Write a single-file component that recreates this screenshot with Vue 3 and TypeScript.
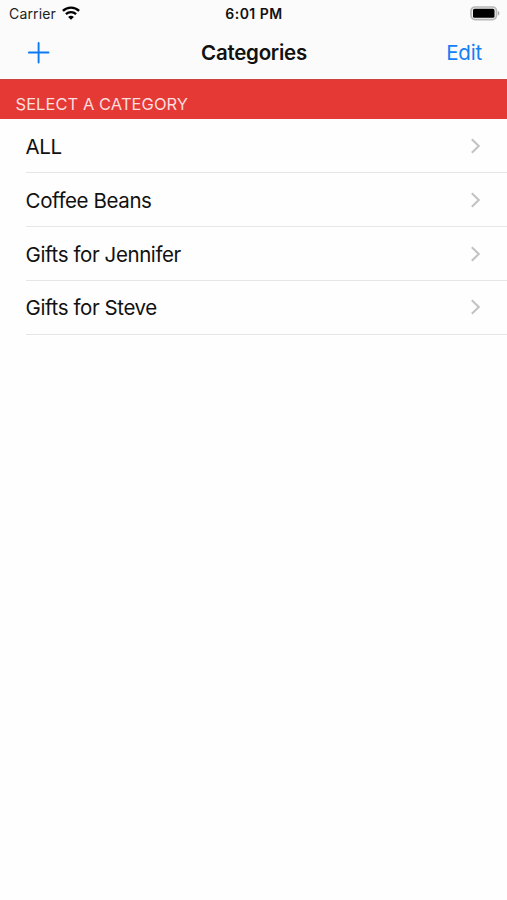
<script setup lang="ts">
import { ref } from 'vue'

const carrier = ref<string>('Carrier')
const time = ref<string>('6:01 PM')
const categories = ref<string[]>(['ALL', 'Coffee Beans', 'Gifts for Jennifer', 'Gifts for Steve'])
</script>

<template>
  <main class="screen">
    <header class="top">
      <div class="status">
        <div class="network">
          <span class="carrier">{{ carrier }}</span>
          <svg class="wifi" width="18" height="14" viewBox="0 0 18 14" fill="none" stroke="#000">
            <path d="M.9 4.9C5.4.5 12.6.5 17.1 4.9" stroke-width="2.4" />
            <path d="M3.9 8.1c2.9-2.7 7.3-2.7 10.2 0" stroke-width="2.3" />
            <path d="M9 13.8 6.1 10.9c1.7-1.5 4.1-1.5 5.8 0Z" fill="#000" stroke="none" />
          </svg>
        </div>
        <span class="time">{{ time }}</span>
        <div class="power">
          <svg width="30" height="15" viewBox="0 0 30 15">
            <rect x="1" y="1" width="25.5" height="12.6" rx="4" fill="#eee" stroke="#b8b8b8" stroke-width="1.7" />
            <rect x="3" y="2.8" width="21.5" height="9" rx="1.6" fill="#000" />
            <path d="M27.9 5c2 .7 2 3.9 0 4.6Z" fill="#aaa" />
          </svg>
        </div>
      </div>
      <nav class="bar">
        <button class="add" aria-label="Add category">
          <svg width="22" height="22" viewBox="0 0 22 22" fill="none" stroke="#0b7bf4" stroke-width="1.9" stroke-linecap="round">
            <path d="M10.6 .95v19.6M.9 10.5h19.6" />
          </svg>
        </button>
        <h1 class="title">Categories</h1>
        <button class="edit">Edit</button>
      </nav>
    </header>
    <h2 class="section"><span>SELECT A CATEGORY</span></h2>
    <ul class="list">
      <li v-for="name in categories" :key="name" class="row">
        <span>{{ name }}</span>
        <svg width="10" height="16" viewBox="0 0 10 16" fill="none" stroke="#c2c2c5" stroke-width="2">
          <path d="m.8 1.2 7 6.8-7 6.8" />
        </svg>
      </li>
    </ul>
  </main>
</template>

<style>
body {
  background: #fefefe;
}
</style>

<style scoped>
.screen {
  height: 900px;
  overflow: hidden;
  background: #fefefe;
  color: #111;
  font-family: Inter, "Liberation Sans", sans-serif;
}
.top {
  box-sizing: border-box;
  height: 79px;
  background: #fbfbfb;
}
.status,
.bar {
  display: grid;
  grid-template-columns: 1fr auto 1fr;
  align-items: center;
}
.status {
  box-sizing: border-box;
  height: 27px;
  padding: 0 7px 0 9px;
  font-size: 14px;
}
.network {
  display: flex;
  align-items: center;
  gap: 6px;
}
.carrier {
  letter-spacing: 0.15px;
  color: #222;
}
.wifi {
  margin-top: -2px;
}
.time {
  margin-right: 1px;
  font-weight: 600;
  font-size: 14px;
  letter-spacing: 0.5px;
}
.power {
  display: flex;
  justify-content: flex-end;
}
.bar {
  height: 51px;
  padding: 0 25px 0 28px;
}
button {
  display: flex;
  padding: 0;
  border: 0;
  background: none;
  font: inherit;
}
.add {
  justify-self: start;
}
.edit {
  justify-self: end;
  color: #1480f5;
  font-size: 20.5px;
  line-height: 24px;
  letter-spacing: -0.2px;
}
.title {
  margin: 0 2px 0 0;
  font-size: 20.5px;
  line-height: 24px;
  font-weight: 600;
  letter-spacing: -0.25px;
}
.section {
  display: flex;
  align-items: flex-end;
  box-sizing: border-box;
  height: 40.4px;
  margin: 0;
  padding: 0 15.5px 5.4px;
  border-top: 1px solid #c9443e;
  background: #e53935;
  color: #fbdedd;
  font-size: 16.5px;
  line-height: 20px;
  letter-spacing: 0.05px;
  font-weight: 400;
}
.list {
  margin: 0;
  padding: 0.4px 0 0 25.6px;
  list-style: none;
}
.row {
  display: flex;
  align-items: center;
  justify-content: space-between;
  box-sizing: border-box;
  height: 53.7px;
  padding: 0 26px 0 0;
  border-bottom: 1px solid #e6e6e7;
  font-size: 20.5px;
  line-height: 24px;
  letter-spacing: -0.4px;
}
.row span {
  padding-top: 2px;
}
</style>
